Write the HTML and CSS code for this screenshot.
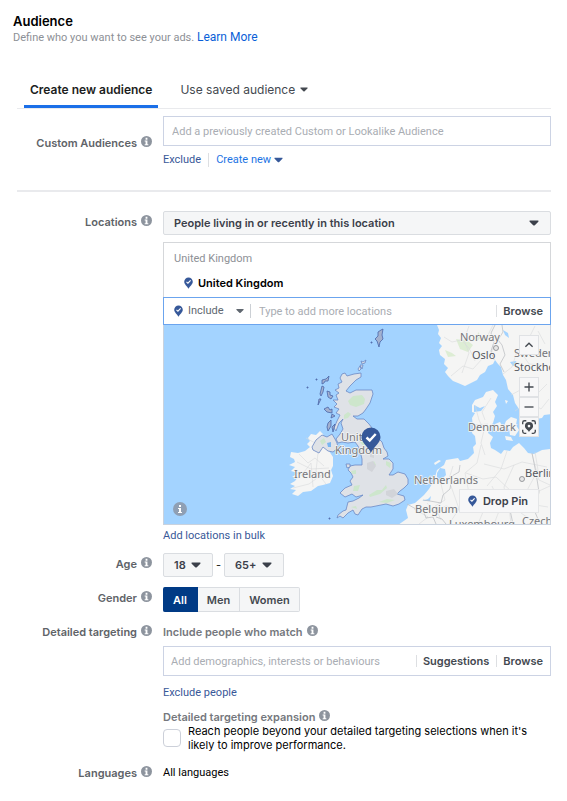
FILE: index.html
```html
<!DOCTYPE html>
<html lang="en">
<head>
<meta charset="utf-8">
<meta name="viewport" content="width=device-width, initial-scale=1">
<title>Audience</title>
<link rel="stylesheet" href="styles.css">
</head>
<body>
<svg class="defs" aria-hidden="true">
  <symbol id="info" viewBox="0 0 12 12"><circle cx="6" cy="6" r="6" fill="#8d949e"/><path d="M5 2h2v2H5zM4 5h3v4h1v1H4V9h1V6H4z" fill="#fff"/></symbol>
  <symbol id="caret" viewBox="0 0 10 6"><path d="M1.200.5h7.600c.7 0 1 .7.5 1.200L5.800 5.200c-.5.5-1.100.5-1.600 0L.7 1.700C.2 1.200.5.500 1.200.500z" fill="currentColor"/></symbol>
  <symbol id="pin" viewBox="0 0 20 26"><path d="M10 .5a9.500 9.500 0 0 0-9.500 9.500c0 6 6 9 9.500 15.500C13.500 19 19.500 16 19.500 10A9.500 9.500 0 0 0 10 .5z" fill="#365899"/><path d="M5.500 10.500l3.200 3 6-6.500" fill="none" stroke="#fff" stroke-width="2.400"/></symbol>
</svg>
<main class="page">
  <header class="head">
    <h1>Audience</h1>
    <p>Define who you want to see your ads. <a href="#">Learn More</a></p>
  </header>

  <form class="form">
    <nav class="tabs">
      <button type="button" class="tab tab-active">Create new audience</button>
      <button type="button" class="tab">Use saved audience <svg class="caret-small"><use href="#caret"/></svg></button>
    </nav>

    <section class="row row-custom">
      <div class="label"><label for="custom">Custom Audiences</label><svg class="info"><use href="#info"/></svg></div>
      <div class="control">
        <input id="custom" class="field" type="text" placeholder="Add a previously created Custom or Lookalike Audience">
        <div class="links">
          <a href="#" class="navy">Exclude</a>
          <a href="#" class="create">Create new <svg class="caret"><use href="#caret"/></svg></a>
        </div>
      </div>
    </section>

    <section class="row row-locations">
      <div class="label"><label for="scope">Locations</label><svg class="info"><use href="#info"/></svg></div>
      <div class="control">
        <div class="select select-wide">
          <select id="scope"><option>People living in or recently in this location</option></select>
          <svg class="caret"><use href="#caret"/></svg>
        </div>
        <div class="places">
          <p class="country">United Kingdom</p>
          <p class="chosen"><svg class="pin"><use href="#pin"/></svg>United Kingdom</p>
        </div>
        <div class="adder">
          <svg class="pin"><use href="#pin"/></svg>
          <div class="select select-plain">
            <select aria-label="Include or exclude"><option>Include</option></select>
            <svg class="caret"><use href="#caret"/></svg>
          </div>
          <input type="text" aria-label="Add locations" placeholder="Type to add more locations">
          <button type="button" class="side">Browse</button>
        </div>
        <div class="map">
          <svg class="chart" viewBox="0 0 386 199" preserveAspectRatio="xMidYMid slice" role="img" aria-label="Map of the United Kingdom">
            <rect width="386" height="199" fill="#a3d3ff"/>
            <g fill="#f5f5f4">
              <path d="M273 0l2 5-1 4 3 4-2 5 3 3-3 4 1 5 5 4-1 5 4 4-3 4 3 4 5 5 5 2 7 3 4-2 8-4 3-5 5-3 3-6 5-2 2-4 3 4 3 3 2 8 3 5 2 9 5 6 2 8 4 6v8l4 3 2 5 9-1 2-5 6-1 2-3 8-1V0z"/>
              <path d="M329 65l-7 2-3 5-8 3-3 5v7l3 1-3 5 1 9-1 6 3 3 1 8-3 3 1 6-4 4-2 2-8 2-2-3-12 2-2 5-7 5-2 7-3 7-3 5-5 6-9 8-7 2-2 5 2 8-10 7H386V124l-8 1-8 4-6-1-4-5-5-5-6 4-3 4-6-1-3 4-6-4-4-2-1-5 3-6-5-4 1-5 4-5 2-7-2-4 4-6-2-4 3-7z"/>
              <path d="M331 99l5-2 3 5-3 5-6-2zM342 96l5-4 6 2-1 6 3 5-4 6-5-1-1-6-5-3zM341 111l6 1 2 4-7-1zM341 75l3 1-2 3zM277 136l-6 4-1-2 5-3z"/>
              <path d="M144 113l3-4 5 1 4-4 3 3 2 7 4 10 4 6v9l-2 4 2 6-3 7-7 2-5 1-7 5-8 1-5 4-6-2 4-4-6-1 5-3-5-2 5-3 3-4-6 0 6-4-7-2 4-4-6-2 6-3-1-3-4-2 1-5 7 1 7-2 5-4-3-3 3-3z"/>
            </g>
            <g fill="#a3d3ff"><path d="M310 80l6 3 5-2-4 5-7 1zM273 148l3-5 5 1 1 6-4 4-5 2zM258 176l6-2 3-3-1 5zM339 5l5 3 1 5-4-3zM362 17l6 4-1 8-5-6zM346 37l6-1 1 3-4 2z"/></g>
            <g fill="#d7ebcc" opacity=".8"><path d="M292 14l12 2 5 4-5 7-8-3zM281 25l7 3 4 3-8 1zM314 7l4 5-5 4z"/></g>
            <g class="roads">
              <path d="M280 12l8 5 9-2 8 8 6 13M287 51l12-10 10 3 9-10M305 1l-5 14 5 13-7 20M329 0l-5 10 6 8-3 13M339 49l9-7 5-16 10-9 8-16M347 70l13-7 10 9 13-13M351 86l14-10 12 8 8-10M355 24l10 15 18 1M370 55l-8 18 4 20M374 6l7 13"/>
              <path d="M311 80l4 15 5 10-3 13 4 12M327 73l-9 14 3 8M308 100l16-1M317 120l-4 18-12 10 4 20 14 19-5 12M289 141l-4 13-8 5 4 16-10 6 6 14M263 178l8 9 11-6 16 4 8-11M250 184l14 8-9 7M320 139l20 5 18-7 25 5M323 161l14-17 6-18M347 199l-2-18 15-10 14-26-3-18M302 148l17 6 13-2 17 16 15 3 22-10M322 175l16 5 21-2 25 4M330 199l7-18-9-20M368 129l7 26 11 5M350 140l-10 22 2 12M285 199l10-15-8-23M357 188l16 11"/>
              <path d="M135 129l9 9 7-5 9 8M137 151l10-13 2 24M129 163l16-4 15-11M154 128l-2 18 10 13M133 137l14 7 18-1M142 113l9 5"/>
            </g>
            <g class="borders"><path d="M330 35l-3-9 3-9-3-9 4-8M340 47l-4-8 5-9-3-10-4-5 5-8-1-7M243 179l9 5 7 1 3 8 7-1 3 7M259 175l7 1 11 2 2-8 7-6 2-13 7-4 1-7M272 192l6 2 4 5M368 128l4 20 3 19-4 20 5 12M353 178l-7 7 3 14"/></g>
            <g class="uk">
              <path d="M178 49L181 48 183 51 190 49 197 48 197 52 192 55 186 61 182 66 186 68 192 65 200 65 208 65 209 69 206 78 202 84 199 88 194 91 189 91 193 94 200 94 205 99 208 103 211 110 218 117 220 123 223 127 224 131 219 134 225 134 229 138 229 144 225 150 229 150 234 147 241 149 244 154 244 159 240 163 236 166 233 169 240 171 241 175 235 179 229 181 222 179 212 181 207 182 202 182 198 184 194 190 191 189 189 185 184 188 179 193 176 191 173 193 174 190 179 186 182 185 184 177 189 176 195 173 199 170 192 172 188 169 181 172 176 168 181 163 188 160 186 156 189 152 187 148 184 145 186 141 191 140 198 140 198 134 196 126 194 121 191 117 184 118 178 117 174 118 172 114 176 109 179 104 177 98 179 94 175 98 172 106 170 103 173 96 176 90 172 88 175 84 170 82 173 79 169 75 174 75 172 70 175 68 171 65 175 63 174 59 178 57 176 53z"/>
              <path d="M148 122l4-7 6-5 5 2 5-3 3 5 2 4 1 5-5 4-5-1-5-4-4 6-6-3z"/>
              <path class="isles" d="M165 51l-3 3-4 1 0 4 2-1 1-2 3 0zM158 61l2 1-1 5-2 4-1-2zM155 74l2 0-3 6zM163 66l3 1 0 3 3 1-2 3-3-2zM160 84l4-2 2 3 2-1 0 4-5-1zM164 98l3-3 0 6-3 5-1-4zM168 102l3-3-2 8zM168 89l3 2-4 2zM217 5l2-1-1 6 1 4-3 3-1 5-2-6-2-2 3-3 0-4zM207 17h1v1h-1zM143 62h1v1h-1zM165 193h1v1h-1zM152 54h1v1h-1z"/>
              <path d="M194 44l2-3 1 3-2 2zM197 36l2 1 3-2-1 3-3 1zM196 40l3 0-1 4zM182 139l4 0 0 3-3 1z"/>
            </g>
            <g fill="#cde6cc"><path d="M184 76l5-5 9-1 3 4-1 5-8 3-6-2zM180 90l4-3 3 2-3 4-4 1zM197 113l5 2-2 7-4-5zM206 122l5 0-1 5-5-2zM187 146l5-1 0 4-4 0zM190 161l6-1-2 6-5 0zM207 139l3-3 2 4-4 2zM222 136l5 2-1 5-4-3zM156 116l4-3 2 4-4 3zM187 182l5-1 1 3zM205 170l8-5 5 0 4-5 1 3-7 6-10 3zM215 177l8-3 8 1-8 3z"/></g>
            <path d="M163 118l4-1v5l-3 0z" fill="#79b5f1"/>
            <g fill="#d2d4d9"><path d="M203 138l6-2 3 5-4 6-5-3zM222 166l8-2 4 5-6 4-6-3zM206 128l4 1 0 4-4-1z"/></g>
            <g class="cities"><circle cx="332" cy="23" r="2.500"/><circle cx="358" cy="154" r="2.500"/></g>
            <g class="names">
              <text x="177" y="116">United</text>
              <text x="171" y="129">Kingdom</text>
              <text x="130" y="153">Ireland</text>
              <text x="296" y="16">Norway</text>
              <text x="350" y="32">Sweden</text>
              <text x="304" y="106">Denmark</text>
              <text x="250" y="159">Netherlands</text>
              <text x="251" y="188">Belgium</text>
              <text x="285" y="203">Luxembourg</text>
              <text x="358" y="200">Czechia</text>
            </g>
            <g class="names names-city">
              <text x="308" y="34">Oslo</text>
              <text x="350" y="46">Stockholm</text>
              <text x="361" y="152">Berlin</text>
            </g>
            <use href="#pin" x="197" y="102" width="20" height="26"/>
          </svg>
          <button type="button" class="map-info" aria-label="Map information"><svg viewBox="0 0 14 14"><circle cx="7" cy="7" r="7" fill="#8f9fb4"/><path d="M6 3h2v2H6zM5 6h3v4h1v1H5v-1h1V7H5z" fill="#fff"/></svg></button>
          <div class="tools">
            <button type="button" class="tool tool-up" aria-label="Collapse"><svg viewBox="0 0 20 20"><path d="M6 12l4-4 4 4"/></svg></button>
            <button type="button" class="tool" aria-label="Zoom in"><svg viewBox="0 0 20 20"><path d="M10 5v10M5 10h10"/></svg></button>
            <button type="button" class="tool" aria-label="Zoom out"><svg viewBox="0 0 20 20"><path d="M5 10h10"/></svg></button>
            <button type="button" class="tool" aria-label="Locate"><svg viewBox="0 0 20 20"><path d="M3 7V5a2 2 0 0 1 2-2h2M13 3h2a2 2 0 0 1 2 2v2M17 13v2a2 2 0 0 1-2 2h-2M7 17H5a2 2 0 0 1-2-2v-2"/><path d="M10 4.500a4.500 4.500 0 0 0-4.500 4.500c0 3 3 4 4.500 6.500 1.500-2.500 4.500-3.500 4.500-6.500a4.500 4.500 0 0 0-4.500-4.500zm0 3a1.500 1.500 0 1 1 0 3 1.500 1.500 0 0 1 0-3z" class="solid"/></svg></button>
          </div>
          <button type="button" class="drop"><svg class="pin"><use href="#pin"/></svg>Drop Pin</button>
        </div>
        <a href="#" class="navy bulk">Add locations in bulk</a>
      </div>
    </section>

    <section class="row row-age">
      <div class="label"><label for="age-min">Age</label><svg class="info"><use href="#info"/></svg></div>
      <div class="control ages">
        <div class="select select-age"><select id="age-min"><option>18</option></select><svg class="caret"><use href="#caret"/></svg></div>
        <span>-</span>
        <div class="select select-age select-max"><select aria-label="Maximum age"><option>65+</option></select><svg class="caret"><use href="#caret"/></svg></div>
      </div>
    </section>

    <section class="row row-gender">
      <div class="label"><span id="gender">Gender</span><svg class="info"><use href="#info"/></svg></div>
      <div class="control segments" role="group" aria-labelledby="gender">
        <button type="button" class="segment segment-on" aria-pressed="true">All</button>
        <button type="button" class="segment" aria-pressed="false">Men</button>
        <button type="button" class="segment" aria-pressed="false">Women</button>
      </div>
    </section>

    <section class="row row-targeting">
      <div class="label"><span>Detailed targeting</span><svg class="info"><use href="#info"/></svg></div>
      <div class="control">
        <div class="subhead"><label for="match">Include people who match</label><svg class="info"><use href="#info"/></svg></div>
        <div class="field match">
          <input id="match" type="text" placeholder="Add demographics, interests or behaviours">
          <button type="button" class="side">Suggestions</button>
          <button type="button" class="side">Browse</button>
        </div>
        <a href="#" class="navy exclude">Exclude people</a>
        <div class="subhead"><span>Detailed targeting expansion</span><svg class="info"><use href="#info"/></svg></div>
        <label class="expand"><input type="checkbox"><span>Reach people beyond your detailed targeting selections when it's likely to improve performance.</span></label>
      </div>
    </section>

    <section class="row row-languages">
      <div class="label"><span>Languages</span><svg class="info"><use href="#info"/></svg></div>
      <div class="control value">All languages</div>
    </section>
  </form>
</main>
</body>
</html>
```
FILE: styles.css
```css
* { box-sizing: border-box; }
body {
  margin: 0;
  background: #fff;
  color: #1c1e21;
  font: 11px/14px Inter, "Liberation Sans", sans-serif;
}
h1, p { margin: 0; }
a { color: #0a5fd8; text-decoration: none; }
button, input, select { font: inherit; color: inherit; margin: 0; }
button { cursor: pointer; }
input::placeholder { color: #a9adb3; opacity: 1; }
svg { display: block; flex: none; }
a, input, .head p, .country, .value, .select-plain select { font-family: Roboto, "Liberation Sans", sans-serif; }
.defs { position: absolute; width: 0; height: 0; }
.page { padding: 13px 16px 16px 13px; }
.head h1 { font-size: 13px; line-height: 16px; font-weight: 600; color: #000; }
.head p { line-height: 16px; color: #8d9096; }
.head a { font-size: 12px; }
.form { padding-left: 4px; }

.tabs {
  display: flex;
  gap: 16px;
  margin-top: 26px;
  padding-left: 7px;
  border-bottom: 1px solid #e9eaed;
}
.tab {
  display: flex;
  align-items: center;
  gap: 5px;
  height: 36px;
  padding: 2px 6px 0;
  border: 0;
  border-bottom: 3px solid transparent;
  background: none;
  font-size: 12px;
  color: #444950;
}
.tab-active { border-color: #1b6fe8; font-weight: 600; color: #1c1e21; }
.caret { width: 10px; height: 6px; }
.caret-small { width: 8px; height: 5px; }
.info { width: 11px; height: 11px; }

.row { display: grid; grid-template-columns: 135px minmax(0, 1fr); column-gap: 11px; }
.label {
  display: flex;
  justify-content: flex-end;
  align-items: flex-start;
  gap: 4px;
  font-weight: 600;
  color: #606368;
}
.control { min-width: 0; }
.field { width: 100%; height: 30px; border: 1px solid #ccd3e4; background: #fff; }
input.field { padding: 0 8px; }
.navy { color: #385898; }
.links { display: flex; gap: 7px; margin-top: 7px; }
.create { display: flex; align-items: center; gap: 3px; padding-left: 7px; border-left: 1px solid #dddfe2; color: #1b74e4; }
.create .caret { color: #365899; width: 9px; }

.row-custom { padding: 7px 0 23px; border-bottom: 2px solid #e9eaed; }
.row-custom .label { padding-top: 20px; }
.row-locations { padding-top: 19px; }
.row-locations .label { padding-top: 4px; }

.select { position: relative; display: flex; align-items: center; color: #3b404a; }
.select select {
  width: 100%;
  height: 24px;
  padding: 0 10px;
  border: 1px solid #dadde1;
  border-radius: 2px;
  background: #f5f6f7;
  font-weight: 600;
  appearance: none;
}
.select .caret { position: absolute; right: 12px; pointer-events: none; }
.places { margin-top: 7px; padding: 8px 10px 6px; border: 1px solid #d5d7da; border-bottom: 0; }
.country { line-height: 16px; color: #8d9096; }
.chosen { display: flex; align-items: center; gap: 5px; margin-top: 8px; padding-left: 10px; line-height: 16px; font-weight: 600; color: #000; }
.pin { width: 9px; height: 12px; }
.adder { display: flex; align-items: center; height: 28px; padding: 0 7px 0 10px; border: 1px solid #6ba4ee; }
.adder input, .match input { flex: 1; min-width: 0; height: 26px; padding: 0 8px; border: 0; background: none; }
.select-plain { width: 63px; margin-left: 5px; }
.select-plain select { height: 14px; padding: 0; border: 0; border-right: 1px solid #ccd0d5; border-radius: 0; background: none; font-weight: 400; color: #606770; }
.select-plain .caret { right: 7px; width: 8px; color: #606770; }
.side { padding: 0 0 0 6px; border: 0; border-left: 1px solid #dddfe2; background: none; line-height: 12px; font-weight: 600; color: #444950; }

.map { position: relative; overflow: hidden; border: 1px solid #c9d2de; border-top: 0; }
.chart { width: 100%; height: auto; aspect-ratio: 386 / 199; }
.roads { fill: none; stroke: #d9dadb; stroke-width: .6; }
.borders { fill: none; stroke: #bfc1c5; stroke-width: .8; }
.uk { fill: #dfe2e7; stroke: #6c89c4; stroke-width: .8; stroke-linejoin: round; }
.isles { fill: #a3b1cf; stroke: #4a66a8; }
.cities { fill: #e7e7e7; stroke: #84878b; stroke-width: .8; }
.names { font: 11px "Noto Sans", sans-serif; fill: #75777b; stroke: #f5f5f5; stroke-width: 1.500; paint-order: stroke; }
.names-city { fill: #55585e; }
.map-info { position: absolute; left: 9px; bottom: 8px; width: 14px; height: 14px; padding: 0; border: 0; background: none; }
.tools { position: absolute; top: 10px; right: 11px; width: 20px; }
.tool { display: block; width: 20px; height: 20px; padding: 0; border: 1px solid #e0e2e5; background: #f7f7f8; }
.tool svg { width: 18px; height: 18px; }
.tool path { fill: none; stroke: #444950; stroke-width: 1.500; }
.tool .solid { fill: #444950; fill-rule: evenodd; stroke: none; }
.tool-up { margin-bottom: 22px; }
.drop { position: absolute; right: 11px; bottom: 11px; display: flex; align-items: center; gap: 6px; height: 24px; padding: 0 10px 0 8px; border: 1px solid #e5e6e8; background: #f7f7f8; font-weight: 600; color: #3b404a; }
.bulk { display: block; margin-top: 4px; }

.row-age { padding-top: 10px; }
.row-age .label, .row-gender .label { padding-top: 4px; }
.ages { display: flex; align-items: center; gap: 3px; }
.select-age { width: 50px; }
.select-max { width: 60px; }
.row-gender { padding-top: 10px; }
.segments { display: flex; }
.segment { height: 25px; padding: 0 9px; border: 1px solid #dadde1; border-left: 0; background: #f5f6f7; font-weight: 600; color: #444950; }
.segment:last-child { border-radius: 0 2px 2px 0; }
.segment-on { padding: 0 10px; border-color: #003a85; border-radius: 2px 0 0 2px; background: #003a85; color: #fff; }

.row-targeting { padding-top: 13px; }
.subhead { display: flex; gap: 4px; font-weight: 600; color: #75787d; }
.match { display: flex; align-items: center; gap: 7px; margin-top: 7px; padding-right: 7px; }
.match input { padding: 0 7px; }
.exclude { display: block; margin: 10px 0; }
.expand { display: flex; align-items: center; gap: 7px; color: #000; }
.expand input { flex: none; width: 18px; height: 18px; border: 1px solid #ccd0d9; border-radius: 4px; background: #fff; appearance: none; }
.row-languages { padding-top: 14px; color: #000; }
```
